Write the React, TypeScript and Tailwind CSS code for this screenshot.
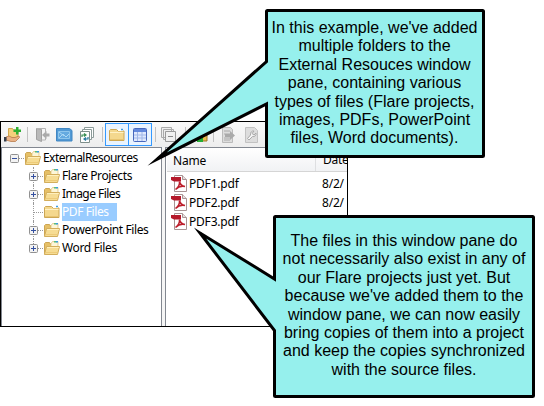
import React from "react";

const ui = "font-['Noto_Sans','Open_Sans',sans-serif]";

function Folder({ open = false }: { open?: boolean }) {
  return (
    <svg width="18" height="16" viewBox="0 0 18 16" className="shrink-0">
      {open ? (
        <>
          <path d="M1.500 14V3.500l1-1h4l1 1.500h6.500V13z" fill="#e6c067" stroke="#cda552" />
          <path d="M8 3.500l1.500-2H15v5H8z" fill="#fdf6d8" stroke="#d9bd74" strokeWidth=".7" />
          <path d="M11 1h2.500v1.500H11z" fill="#5bbd7b" />
          <path d="M13 1h2v1.500h-2z" fill="#3c9be0" />
          <path d="M3.500 6.500h13l-2 8H1.500z" fill="#f6dc93" stroke="#d3ae5c" />
          <path d="M4 7.500h11.800" stroke="#fff0bd" />
          <path d="M2.500 12.500h12" stroke="#edcb79" />
        </>
      ) : (
        <>
          <path d="M1.500 13.500v-10l1-1h6l1.500 1.500h6v9.500z" fill="#f4d88e" stroke="#cda754" />
          <path d="M10 1.800h5v2.200h-5z" fill="#fff" />
          <path d="M13 1.700h2v1.500h-2z" fill="#3c9be0" />
          <path d="M2 5.500h13.500" stroke="#fff1c4" />
          <path d="M2 12.500h13.500" stroke="#e8c470" />
        </>
      )}
    </svg>
  );
}

function Expander({ minus = false }: { minus?: boolean }) {
  return (
    <svg width="9" height="9" viewBox="0 0 9 9" className="shrink-0">
      <rect x=".5" y=".5" width="8" height="8" rx="1" fill="#f3f3f3" stroke="#919191" />
      <path d={minus ? "M2 4.500h5" : "M2 4.500h5M4.500 2v5"} stroke="#3450a0" />
    </svg>
  );
}

function Branch({ label, closed = false, last = false, tracking }: { label: string; closed?: boolean; last?: boolean; tracking: string }) {
  return (
    <div className="flex h-[18px] items-center pl-[27px]">
      <div className="relative flex h-[18px] w-[14px] items-center">
        <div className={`absolute left-1 top-0 border-l border-dotted border-[#999] ${last ? "h-[9px]" : "h-[18px]"}`} />
        <div className="absolute left-1 top-[9px] w-[10px] border-t border-dotted border-[#999]" />
        {!closed && <div className="relative"><Expander /></div>}
      </div>
      <Folder open={!closed} />
      <span className={`ml-px h-[18px] whitespace-nowrap leading-[18px] ${tracking} ${closed ? "w-[55px] bg-[#99ccff] text-white" : ""}`}>{label}</span>
    </div>
  );
}

function PdfRow({ name, date }: { name: string; date: string }) {
  return (
    <div className="flex h-[19px] items-center">
      <svg width="16" height="17" viewBox="0 0 16 17" className="ml-[5px] shrink-0">
        <path d="M3.500.500h8l4 4v12h-12z" fill="#fff" stroke="#a99494" />
        <path d="M11.500.500v4h4" fill="#e6dede" stroke="#a99494" />
        <path d="M0 2h10v4.500H3L0 5z" fill="#b5192a" />
        <path d="M8.500 6.500c.500 3-1 5.500-4 8 2.500-2.500 6-3.700 9.500-3-3.500-.5-5-2.500-5.500-5z" fill="none" stroke="#bd1f2c" strokeWidth="1.600" />
      </svg>
      <span className="w-[135px] shrink-0 pl-[2px] tracking-[-0.2px]">{name}</span>
      <span className="whitespace-nowrap tracking-[-0.2px]">{date}</span>
    </div>
  );
}

const Sep = () => <span className="h-[15px] w-px shrink-0 bg-[#c2c2c2]" />;

function Toolbar() {
  return (
    <div className="flex h-[25px] items-center bg-gradient-to-b from-[#fafafa] to-[#ededed]">
      <svg width="18" height="18" viewBox="0 0 18 18" className="ml-[2px] shrink-0">
        <path d="M5.500 12V2.500h4l1 1.500h4.500v8z" fill="#f4d07c" stroke="#d1a64c" />
        <path d="M13 1h2.500v2.500H18V6h-2.500v2.500H13V6h-2.500V3.500H13z" fill="#2daf32" />
        <path d="M3 11l3-1 3 1.500h3l4-1.500.5 1.500-4 4H8l-5-1.500z" fill="#e9b286" stroke="#b87b4b" strokeWidth=".8" />
        <path d="M1 11h2.500v4.500H1z" fill="#353d4b" />
      </svg>
      <span className="w-[6px]" /><Sep />
      <svg width="16" height="16" viewBox="0 0 16 16" className="ml-[7px] shrink-0">
        <path d="M1.500 1.500l5 1v12l-5-2z" fill="#b9b9b9" stroke="#a0a0a0" />
        <path d="M1.500 1.500h9V5M6.500 13h4v-2" fill="none" stroke="#b4b4b4" />
        <path d="M14.500 6.500h-3V4L7 8l4.500 4V9.500h3z" fill="#aaa" />
      </svg>
      <svg width="17" height="16" viewBox="0 0 17 16" className="ml-[5px] shrink-0">
        <path d="M.5 1.500h13l2.500 2v10.500H.5z" fill="#529ad5" stroke="#4187c3" />
        <path d="M2.500 4.500h11v7h-11z" stroke="#8ec6ec" fill="#64aae0" />
        <path d="M3 5l5 4M3 11l4-4 3 3 3-3" stroke="#aad8f5" fill="none" />
      </svg>
      <svg width="16" height="16" viewBox="0 0 16 16" className="ml-[6px] shrink-0">
        <path d="M5.500 3V.500h9v10H12M3.500 5V2.500h9v10H11" fill="#fff" stroke="#8b9a98" />
        <path d="M1.500 4.500h9v11h-9z" fill="#fff" stroke="#7e8f8b" />
        <path d="M3 10V8h3M5 6.500L7 8 5 9.500" stroke="#398f54" strokeWidth="1.200" fill="none" />
        <path d="M9 10v2H6M7 10.500L5 12l2 1.500" stroke="#2979a0" strokeWidth="1.200" fill="none" />
      </svg>
      <span className="w-[7px]" /><Sep />
      <span className="ml-[2px] flex h-[23px] w-[24px] items-center justify-center border border-[#3399ff] bg-[#eaf4ff]"><Folder /></span>
      <span className="ml-[-1px] flex h-[23px] w-[24px] items-center justify-center border border-[#3399ff] bg-[#eaf4ff]">
        <svg width="14" height="14" viewBox="0 0 14 14"><rect x=".5" y=".5" width="13" height="13" rx="1" fill="#dfe8fd" stroke="#4868bd" /><path d="M1 1h12v3H1z" fill="#6389dd" /><path d="M1 7h12M1 10h12M4.500 4v9M9 4v9" stroke="#a0b7e8" /></svg>
      </span>
      <span className="w-[3px]" /><Sep />
      <svg width="16" height="16" viewBox="0 0 16 16" className="ml-[5px] shrink-0"><path d="M.500.500h10v10H.500z M2.500 2.500h10v10h-10z" fill="#eee" stroke="#aaa" /><path d="M4.500 4.500h10v10h-10z" fill="#f0f0f0" stroke="#999" /><path d="M7 9.500h5" stroke="#888" /></svg>
      <span className="w-[8px]" /><Sep />
      <svg width="16" height="16" viewBox="0 0 16 16" className="ml-[10px] shrink-0"><path d="M1 8h10v6H1z" fill="#e9bd51" stroke="#9b742a" /><path d="M1 10h6v5H1z" fill="#24ad34" /></svg>
      <span className="w-px" /><Sep />
      <svg width="15" height="16" viewBox="0 0 15 16" className="ml-[7px] shrink-0"><path d="M1.500.500h8l2 2v13h-10z" fill="#ddd" stroke="#bbb" /><path d="M3 4h6M3 7h6M3 11h6M3 13h6" stroke="#aaa" /><path d="M4 7h5V4l5 4.500L9 13v-3H4z" fill="#aaa" /></svg>
      <svg width="15" height="16" viewBox="0 0 15 16" className="ml-[8px] shrink-0"><path d="M1.500.500h9l3 3v12h-12z" fill="#ddd" stroke="#c2c2c2" /><path d="M10 4L8 6.500l2 1.500 2-2c.5 2.500-1.500 4-3.500 3.500L5 13l-1.500-1.500L6.500 8C6 5.500 8 3.500 10 4z" fill="#f4f4f4" stroke="#aaa" /></svg>
    </div>
  );
}

const first = ["In this example, we've added", "multiple folders to the", "External Resouces window", "pane, containing various", "types of files (Flare projects,", "images, PDFs, PowerPoint", "files, Word documents)."];
const second = ["The files in this window pane do", "not necessarily also exist in any of", "our Flare projects just yet. But", "because we've added them to the", "window pane, we can now easily", "bring copies of them into a project", "and keep the copies synchronized", "with the source files."];

export default function App() {
  return (
    <div className="relative h-[406px] w-[544px] overflow-hidden bg-white pt-[121px] text-black">
      <div className={`flex h-[206px] w-[348px] flex-col overflow-hidden border border-black bg-white text-[12px] ${ui}`}>
        <Toolbar />
        <div className="flex min-h-0 flex-1 bg-[#f5f5f5]">
          <div className="w-[161px] shrink-0 border-x border-t border-[#828790] bg-white pt-px">
            <div className="flex h-[18px] items-center pl-2">
              <Expander minus />
              <span className="w-[5px] border-t border-dotted border-[#999]" />
              <Folder open />
              <span className="pl-[1px] tracking-[-0.55px]">ExternalResources</span>
            </div>
            <Branch label="Flare Projects" tracking="tracking-[-0.4px]" />
            <Branch label="Image Files" tracking="tracking-[-0.55px]" />
            <Branch label="PDF Files" closed tracking="tracking-[-0.4px]" />
            <Branch label="PowerPoint Files" tracking="tracking-[-0.4px]" />
            <Branch label="Word Files" last tracking="tracking-[-0.35px]" />
          </div>
          <div className="ml-[3px] min-w-0 flex-1 overflow-hidden border-l border-t border-[#828790] bg-white">
            <div className="ml-px flex h-[24px] items-center border-b border-[#d5d5d5] bg-gradient-to-b from-white to-[#f1f2f4]">
              <span className="h-full w-[149px] shrink-0 border-r border-[#dedfe1] pl-[6px] leading-[26px] tracking-[-0.2px]">Name</span>
              <span className="pl-[7px] leading-[26px] tracking-[-0.3px]">Date</span>
            </div>
            <div className="pt-[2px]">
              <PdfRow name="PDF1.pdf" date="8/2/" />
              <PdfRow name="PDF2.pdf" date="8/2/" />
              <PdfRow name="PDF3.pdf" date="" />
            </div>
          </div>
        </div>
      </div>

      <svg width="544" height="406" viewBox="0 0 544 406" className="absolute left-0 top-0">
        <g fill="#96f0ed" stroke="#000" strokeWidth="3" strokeLinejoin="miter" strokeMiterlimit="20">
          <path d="M267.500 10.500h215q1 0 1 1v144q0 1-1 1h-215q-1 0-1-1V104L157 159.200l109.500-97.700v-50q0-1 1-1z" />
          <path d="M275.500 216.500h257q1 0 1 1v178q0 1-1 1h-257q-1 0-1-1v-65L200 233l74.500 46v-61.500q0-1 1-1z" />
        </g>
      </svg>
      <div className="absolute left-[265px] top-[19px] w-[219px] text-center font-['Liberation_Sans',Arial,sans-serif] text-[16px] leading-[18.4px]">
        {first.map((line) => <div key={line} className="whitespace-nowrap">{line}</div>)}
      </div>
      <div className="absolute left-[273px] top-[232px] w-[262px] text-center font-['Liberation_Sans',Arial,sans-serif] text-[16px] leading-[18.4px]">
        {second.map((line) => <div key={line} className="whitespace-nowrap">{line}</div>)}
      </div>
    </div>
  );
}
